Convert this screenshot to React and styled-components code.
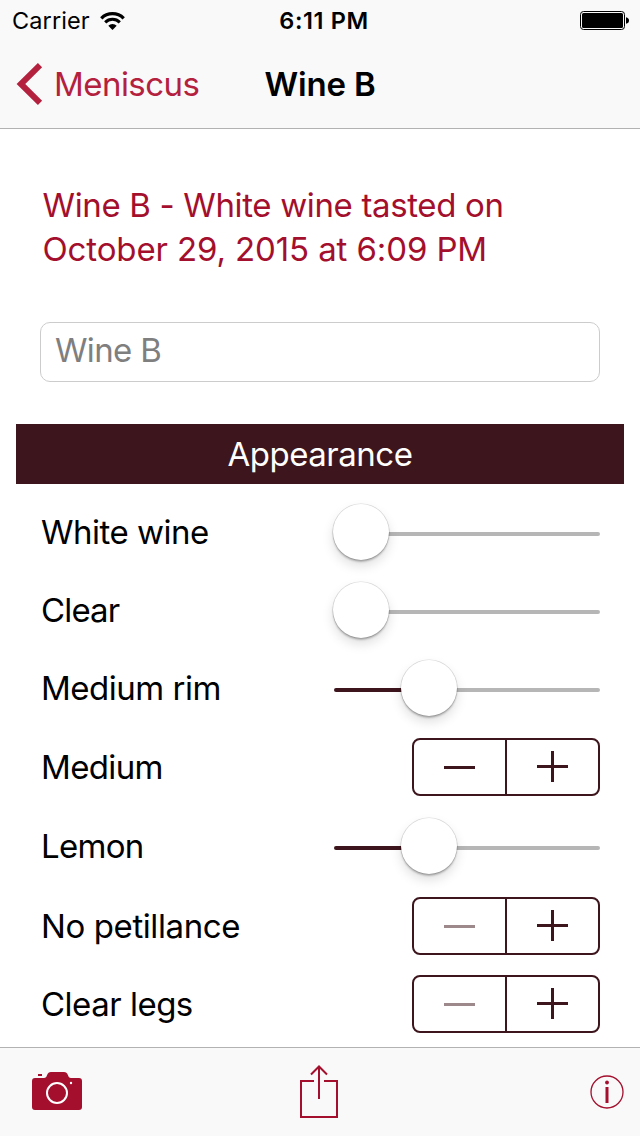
import React from "react";
import styled, { createGlobalStyle } from "styled-components";

const WINE = "#3d151c";
const CRIMSON = "#a30f2d";
const HAIRLINE = "#b2b2b2";

const GlobalStyle = createGlobalStyle`
  * { box-sizing: border-box; }
  body {
    margin: 0;
    background: #fff;
    color: #000;
    font-family: Inter, "Liberation Sans", sans-serif;
    font-size: 33px;
  }
  button, input { font: inherit; }
`;

const Screen = styled.div`
  display: flex;
  flex-direction: column;
  width: 640px;
  height: 1136px;
  overflow: hidden;
`;

const Header = styled.header`
  flex: none;
  height: 129px;
  background: #f9f9f9;
  border-bottom: 1px solid ${HAIRLINE};
`;

const StatusBar = styled.div`
  display: grid;
  grid-template-columns: 1fr auto 1fr;
  align-items: center;
  height: 40px;
  padding: 2px 11px 0 12px;
  font-size: 23.5px;
  line-height: 38px;
`;

const Carrier = styled.div`
  display: flex;
  align-items: center;
  gap: 10px;
  letter-spacing: 0.1px;
`;

const Clock = styled.div`
  font-weight: 600;
  letter-spacing: 0.6px;
  padding-left: 7px;
`;

const BatteryIcon = styled.svg`
  justify-self: end;
`;

const NavBar = styled.nav`
  display: grid;
  grid-template-columns: 1fr auto 1fr;
  align-items: center;
  height: 88px;
  padding: 0 16px;
`;

const BackButton = styled.button`
  display: flex;
  align-items: center;
  justify-self: start;
  gap: 11px;
  padding: 0;
  border: 0;
  background: none;
  color: #b4213f;
  letter-spacing: -0.55px;
`;

const NavTitle = styled.h1`
  margin: 0;
  font-size: 33px;
  font-weight: 600;
  letter-spacing: -0.15px;
`;

const Content = styled.main`
  flex: 1;
  min-height: 0;
  overflow: hidden;
  padding: 54px 16px 0;
`;

const Summary = styled.h2`
  margin: 0 24px 0 26.5px;
  font-size: 33px;
  font-weight: 400;
  line-height: 44px;
  color: ${CRIMSON};
`;

const SummaryLine = styled.span`
  display: block;
  white-space: nowrap;
  letter-spacing: ${(p) => p.$spacing}px;
`;

const NameField = styled.input`
  display: block;
  width: 560px;
  height: 60px;
  margin: 51px 24px 42px;
  padding: 0 14px 5px;
  border: 1px solid #cccccc;
  border-radius: 10px;
  background: #fff;
  outline: none;
  letter-spacing: -0.65px;
  &::placeholder { color: #7f7f7f; opacity: 1; }
`;

const SectionTitle = styled.h3`
  margin: 0;
  height: 60px;
  background: ${WINE};
  color: #fff;
  font-size: 33px;
  font-weight: 400;
  line-height: 60px;
  letter-spacing: -0.5px;
  text-align: center;
`;

const Rows = styled.div`
  padding: 9px 24px 0 25px;
`;

const Row = styled.div`
  display: flex;
  align-items: center;
  justify-content: space-between;
  height: ${(p) => p.$height}px;
`;

const RowLabel = styled.span`
  white-space: nowrap;
  letter-spacing: ${(p) => p.$spacing}px;
`;

const SliderBox = styled.div`
  position: relative;
  display: flex;
  align-items: center;
  width: 268px;
  height: 56px;
  padding: 4px 0 0 2px;
`;

const Track = styled.div`
  flex: 1;
  height: 4px;
  border-radius: 2px;
  background: linear-gradient(to right, ${WINE} ${(p) => p.$fill}px, #b6b6b6 ${(p) => p.$fill}px);
`;

const Thumb = styled.div`
  position: absolute;
  top: 0;
  left: ${(p) => p.$offset + 1}px;
  width: 56px;
  height: 56px;
  border-radius: 50%;
  background: #fff;
  box-shadow: 0 0 0 0.6px rgba(0, 0, 0, 0.14), 0 6px 12px rgba(0, 0, 0, 0.13), 0 2px 2px rgba(0, 0, 0, 0.24);
`;

const StepperBox = styled.div`
  display: flex;
  width: 188px;
  height: 58px;
  border: 2px solid ${WINE};
  border-radius: 8px;
`;

const StepButton = styled.button`
  display: block;
  flex: none;
  width: ${(p) => p.$width}px;
  height: 54px;
  padding: 0;
  border: 0;
  background: none;
  color: ${WINE};
  & + & { border-left: 2px solid ${WINE}; }
  &:disabled { opacity: 0.5; }
  svg { display: block; }
`;

const Toolbar = styled.footer`
  flex: none;
  display: grid;
  grid-template-columns: 1fr auto 1fr;
  align-items: center;
  height: 89px;
  padding: 0 16px 2px 14px;
  background: #f9f9f9;
  border-top: 1px solid ${HAIRLINE};
`;

const ToolButton = styled.button`
  display: block;
  padding: 0;
  border: 0;
  background: none;
  color: ${CRIMSON};
  svg { display: block; }
`;

const CameraButton = styled(ToolButton)`
  justify-self: start;
  margin-left: 18px;
`;

const InfoButton = styled(ToolButton)`
  justify-self: end;
  margin-top: 2px;
`;

const Slider = ({ offset }) => (
  <SliderBox>
    <Track $fill={offset} />
    <Thumb $offset={offset} />
  </SliderBox>
);

const Stepper = ({ atMinimum }) => (
  <StepperBox>
    <StepButton $width={91} disabled={atMinimum} aria-label="Decrease">
      <svg width="91" height="54"><path d="M30 27.5h31" stroke="currentColor" strokeWidth="3" /></svg>
    </StepButton>
    <StepButton $width={93} aria-label="Increase">
      <svg width="91" height="54"><path d="M30 26.5h31M45.5 11v31" stroke="currentColor" strokeWidth="3" /></svg>
    </StepButton>
  </StepperBox>
);

const rows = [
  { label: "White wine", height: 78, offset: 0, spacing: -0.5 },
  { label: "Clear", height: 78, offset: 0, spacing: -0.85 },
  { label: "Medium rim", height: 78, offset: 68, spacing: -0.5 },
  { label: "Medium", height: 80, stepper: true, spacing: -0.65 },
  { label: "Lemon", height: 78, offset: 68, spacing: -0.7 },
  { label: "No petillance", height: 82, stepper: true, atMinimum: true, spacing: -0.4 },
  { label: "Clear legs", height: 74, stepper: true, atMinimum: true, spacing: -0.5 },
];

export default function App() {
  return (
    <Screen>
      <GlobalStyle />
      <Header>
        <StatusBar>
          <Carrier>
            Carrier
            <svg width="25" height="18" viewBox="0 0 25 18">
              <path d="M1.3 6.300a15.900 15.900 0 0 1 22.400 0" fill="none" stroke="#000" strokeWidth="3.300" />
              <path d="M5.200 10.400a10.300 10.300 0 0 1 14.600 0" fill="none" stroke="#000" strokeWidth="3" />
              <path d="M12.500 18l-4.200-4.300a5.900 5.900 0 0 1 8.400 0z" />
            </svg>
          </Carrier>
          <Clock>6:11 PM</Clock>
          <BatteryIcon width="49" height="20" viewBox="0 0 49 20">
            <rect x="0.5" y="0.5" width="44" height="18" rx="3" fill="none" stroke="#000" />
            <rect x="2" y="2" width="41" height="15" rx="1.5" />
            <path d="M46 6.2c2 .4 3 1.600 3 3.300s-1 2.900-3 3.300z" />
          </BatteryIcon>
        </StatusBar>
        <NavBar>
          <BackButton>
            <svg width="27" height="42" viewBox="0 0 27 42">
              <path d="M24 2.200L4.900 21L24 39.800" fill="none" stroke="currentColor" strokeWidth="6" />
            </svg>
            Meniscus
          </BackButton>
          <NavTitle>Wine B</NavTitle>
        </NavBar>
      </Header>
      <Content>
        <Summary>
          <SummaryLine $spacing={-0.35}>Wine B - White wine tasted on</SummaryLine>
          <SummaryLine $spacing={-0.12}>October 29, 2015 at 6:09 PM</SummaryLine>
        </Summary>
        <NameField placeholder="Wine B" />
        <SectionTitle>Appearance</SectionTitle>
        <Rows>
          {rows.map((r) => (
            <Row key={r.label} $height={r.height}>
              <RowLabel $spacing={r.spacing}>{r.label}</RowLabel>
              {r.stepper ? <Stepper atMinimum={r.atMinimum} /> : <Slider offset={r.offset} />}
            </Row>
          ))}
        </Rows>
      </Content>
      <Toolbar>
        <CameraButton aria-label="Camera">
          <svg width="50" height="38" viewBox="0 0 50 38">
            <path
              d="M3 6h9c1.800 0 2.300-1 3-2.700C15.900 1 17 0 19 0h13c2 0 3.100 1 4 3.300C36.700 5 37.200 6 39 6h8a3 3 0 0 1 3 3v26a3 3 0 0 1-3 3H3a3 3 0 0 1-3-3V9a3 3 0 0 1 3-3z"
              fill="currentColor"
            />
            <path d="M6 3h4" stroke="currentColor" strokeWidth="2" />
            <circle cx="25" cy="21" r="10" fill="none" stroke="#fff" strokeWidth="2" />
            <circle cx="39" cy="11" r="1.200" fill="#fff" />
          </svg>
        </CameraButton>
        <ToolButton aria-label="Share">
          <svg width="38" height="53" viewBox="0 0 38 53">
            <path d="M14 16H1v36h36V16H24M19 34V2M11 9.500L19 1.500l8 8" fill="none" stroke="currentColor" strokeWidth="2" />
          </svg>
        </ToolButton>
        <InfoButton aria-label="Info">
          <svg width="34" height="34" viewBox="0 0 34 34">
            <circle cx="17" cy="17" r="16" fill="none" stroke="currentColor" strokeWidth="1.300" />
            <circle cx="17" cy="7.500" r="1.900" fill="currentColor" />
            <path d="M17 12v16" stroke="currentColor" strokeWidth="3" />
          </svg>
        </InfoButton>
      </Toolbar>
    </Screen>
  );
}
